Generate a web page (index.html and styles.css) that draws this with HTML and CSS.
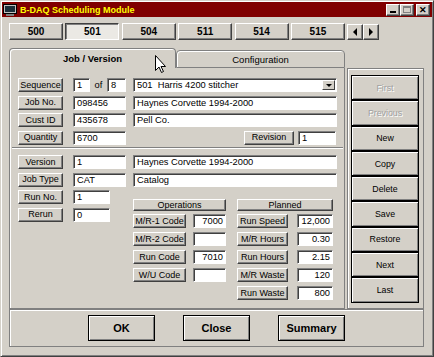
FILE: index.html
```html
<!DOCTYPE html>
<html lang="en">
<head>
  <meta charset="UTF-8" />
  <title>B-DAQ Scheduling Module</title>
  <link rel="stylesheet" href="styles.css">
</head>
<body>
  <div class="window">
    <div class="titlebar">
      <svg class="appicon" width="14" height="12" viewBox="0 0 14 12">
        <rect x="0.5" y="0.5" width="13" height="9" fill="#c0c0c0" stroke="#000"/>
        <rect x="2" y="2" width="10" height="6" fill="#1c2f3a"/>
        <rect x="3" y="10" width="8" height="2" fill="#808080"/>
      </svg>
      <span class="title">B-DAQ Scheduling Module</span>
      <div class="ctrls">
        <span class="ctrl"><i class="min"></i></span>
        <span class="ctrl dim"><i class="max"></i></span>
        <span class="ctrl close">✕</span>
      </div>
    </div>

    <div class="content">
      <div class="jobbar">
        <button class="num">500</button>
        <button class="num down">501</button>
        <button class="num">504</button>
        <button class="num">511</button>
        <button class="num">514</button>
        <button class="num">515</button>
        <div class="arrows">
          <button class="arr"><i class="tri-l"></i></button>
          <button class="arr"><i class="tri-r"></i></button>
        </div>
      </div>

      <div class="main">
        <div class="tabcol">
          <div class="tabs">
            <div class="tab active">Job / Version</div>
            <div class="tab">Configuration</div>
          </div>
          <div class="tabpanel">
            <div class="rows">
              <div class="row">
                <button class="lbl">Sequence</button>
                <div class="field w17">1</div>
                <span class="of">of</span>
                <div class="field w19">8</div>
                <div class="field combo">501&nbsp; Harris 4200 stitcher<span class="drop"><i class="tri-d"></i></span></div>
              </div>
              <div class="row">
                <button class="lbl">Job No.</button>
                <div class="field w53">098456</div>
                <div class="field wide">Haynes Corvette 1994-2000</div>
              </div>
              <div class="row">
                <button class="lbl">Cust ID</button>
                <div class="field w53">435678</div>
                <div class="field wide">Pell Co.</div>
              </div>
              <div class="row">
                <button class="lbl">Quantity</button>
                <div class="field w53">6700</div>
                <button class="lbl rev">Revision</button>
                <div class="field w38">1</div>
              </div>
            </div>

            <div class="sep"></div>

            <div class="rows">
              <div class="row">
                <button class="lbl">Version</button>
                <div class="field w53">1</div>
                <div class="field wide">Haynes Corvette 1994-2000</div>
              </div>
              <div class="row">
                <button class="lbl">Job Type</button>
                <div class="field w53">CAT</div>
                <div class="field wide">Catalog</div>
              </div>
              <div class="split">
                <div class="rows">
                  <div class="row">
                    <button class="lbl">Run No.</button>
                    <div class="field w37">1</div>
                  </div>
                  <div class="row">
                    <button class="lbl">Rerun</button>
                    <div class="field w37">0</div>
                  </div>
                </div>
                <div class="ops">
                  <div class="opcol">
                    <button class="head">Operations</button>
                    <div class="oprow"><button class="lbl w53b">M/R-1 Code</button><div class="field num-in w33">7000</div></div>
                    <div class="oprow"><button class="lbl w53b">M/R-2 Code</button><div class="field num-in w33"></div></div>
                    <div class="oprow"><button class="lbl w53b">Run Code</button><div class="field num-in w33">7010</div></div>
                    <div class="oprow"><button class="lbl w53b">W/U Code</button><div class="field num-in w33"></div></div>
                  </div>
                  <div class="opcol plan">
                    <button class="head">Planned</button>
                    <div class="oprow"><button class="lbl w51">Run Speed</button><div class="field num-in w36">12,000</div></div>
                    <div class="oprow"><button class="lbl w51">M/R Hours</button><div class="field num-in w36">0.30</div></div>
                    <div class="oprow"><button class="lbl w51">Run Hours</button><div class="field num-in w36">2.15</div></div>
                    <div class="oprow"><button class="lbl w51">M/R Waste</button><div class="field num-in w36">120</div></div>
                    <div class="oprow"><button class="lbl w51">Run Waste</button><div class="field num-in w36">800</div></div>
                  </div>
                </div>
              </div>
            </div>
          </div>
        </div>

        <div class="sidebar">
          <button class="side off">First</button>
          <button class="side off">Previous</button>
          <button class="side">New</button>
          <button class="side">Copy</button>
          <button class="side">Delete</button>
          <button class="side">Save</button>
          <button class="side">Restore</button>
          <button class="side">Next</button>
          <button class="side">Last</button>
        </div>
      </div>

      <div class="footer">
        <button class="big">OK</button>
        <button class="big">Close</button>
        <button class="big">Summary</button>
      </div>
    </div>

    <svg class="cursor" width="12" height="19" viewBox="0 0 12 19">
      <path d="M0.5 0.5 L0.5 15.5 L4 12 L6.5 17.5 L8.5 16.5 L6 11.5 L10.5 11.5 Z" fill="#fff" stroke="#000" stroke-width="1"/>
    </svg>
  </div>
</body>
</html>
```

FILE: styles.css
```css
* {
  box-sizing: border-box;
}

body {
  margin: 0;
  font-family: "Liberation Sans", Arial, sans-serif;
  font-size: 9px;
  color: #000;
  background: #d4d0c8;
}

button {
  font-family: inherit;
  font-size: inherit;
  color: inherit;
  padding: 0;
  margin: 0;
  background: #d4d0c8;
}

.window {
  position: relative;
  width: 434px;
  height: 357px;
  background: #d4d0c8;
  border: 1px solid;
  border-color: #d4d0c8 #404040 #404040 #d4d0c8;
  box-shadow: inset 1px 1px #fff, inset -1px -1px #808080;
  padding: 1px;
  display: flex;
  flex-direction: column;
}

/* title bar */
.titlebar {
  height: 15px;
  background: #800000;
  display: flex;
  align-items: center;
  padding: 0 2px 0 1px;
}

.appicon {
  margin-right: 3px;
}

.title {
  flex: 1;
  color: #ffff00;
  font-weight: bold;
  font-size: 9px;
}

.ctrls {
  display: flex;
}

.ctrl {
  width: 14px;
  height: 12px;
  background: #d4d0c8;
  border: 1px solid;
  border-color: #fff #404040 #404040 #fff;
  box-shadow: inset -1px -1px #808080;
  position: relative;
}

.ctrl .min {
  position: absolute;
  left: 3px;
  bottom: 2px;
  width: 6px;
  height: 2px;
  background: #000;
}

.ctrl .max {
  position: absolute;
  left: 2px;
  top: 1px;
  width: 8px;
  height: 7px;
  border: 1px solid #808080;
  border-top-width: 2px;
}

.ctrl.close {
  margin-left: 2px;
  font-size: 9px;
  font-weight: bold;
  line-height: 10px;
  text-align: center;
}

/* body */
.content {
  flex: 1;
  display: flex;
  flex-direction: column;
  padding: 6px 8px 8px 7px;
}

.jobbar {
  display: flex;
  align-items: center;
  gap: 2.4px;
  height: 17px;
}

.num {
  width: 54px;
  height: 17px;
  font-weight: bold;
  font-size: 10px;
  border: 1px solid;
  border-color: #fff #404040 #404040 #fff;
  box-shadow: inset -1px -1px #808080;
}

.num.down {
  background: #ebe9e4;
  border-color: #404040 #fff #fff #404040;
  box-shadow: inset 1px 1px #808080;
}

.arrows {
  display: flex;
  margin-left: 0;
}

.arr {
  width: 16px;
  height: 16px;
  border: 1px solid;
  border-color: #fff #404040 #404040 #fff;
  box-shadow: inset -1px -1px #808080;
  display: flex;
  align-items: center;
  justify-content: center;
}

.tri-l, .tri-r, .tri-d {
  display: block;
  width: 0;
  height: 0;
  border: 4px solid transparent;
}

.tri-l {
  border-right-color: #000;
  border-left-width: 0;
}

.tri-r {
  border-left-color: #000;
  border-right-width: 0;
}

.tri-d {
  border-width: 3px 3.5px 0;
  border-top-color: #000;
}

/* tabs + panel */
.main {
  display: flex;
  gap: 2px;
  margin-top: 8px;
}

.tabcol {
  width: 336px;
  display: flex;
  flex-direction: column;
}

.tabs {
  display: flex;
  align-items: flex-end;
  height: 20px;
}

.tab {
  width: 169px;
  height: 18px;
  border: 1px solid #808080;
  border-radius: 4px 4px 0 0;
  box-shadow: inset 1px 1px #fff;
  text-align: center;
  line-height: 17px;
  font-size: 9.5px;
}

.tab.active {
  width: 167px;
  height: 20px;
  border-bottom: none;
  font-weight: bold;
  line-height: 19px;
}

.tabpanel {
  height: 241px;
  border: 1px solid #808080;
  border-top: none;
  box-shadow: inset 1px 0 #fff;
  padding: 10px 6px 0 8px;
}

.rows {
  display: flex;
  flex-direction: column;
  gap: 3.5px;
}

.row {
  display: flex;
  align-items: center;
  height: 14px;
}

.lbl {
  width: 45px;
  height: 14px;
  flex-shrink: 0;
  border: 1px solid;
  border-color: #fff #404040 #404040 #fff;
  box-shadow: inset -1px -1px #808080;
  line-height: 11px;
  text-align: center;
  margin-right: 10px;
}

.lbl.rev {
  width: 50px;
  margin-left: auto;
  margin-right: 4px;
}

.field {
  height: 14px;
  flex-shrink: 0;
  background: #fff;
  border: 1px solid;
  border-color: #808080 #fff #fff #808080;
  box-shadow: inset 1px 1px #404040;
  padding: 0 2px 0 3px;
  line-height: 12px;
  font-size: 9.3px;
  white-space: nowrap;
  overflow: hidden;
  position: relative;
}

.w17 { width: 17px; }
.w19 { width: 19px; }
.w33 { width: 33px; }
.w36 { width: 36px; }
.w37 { width: 37px; }
.w38 { width: 38px; margin-right: 2px; }
.w53 { width: 53px; margin-right: 7px; }

.of {
  width: 17px;
  text-align: center;
  font-size: 9.3px;
}

.w19 {
  margin-right: 7px;
}

.wide, .combo {
  width: 204px;
}

.drop {
  position: absolute;
  right: 1px;
  top: 1px;
  width: 13px;
  height: 10px;
  background: #d4d0c8;
  border: 1px solid;
  border-color: #fff #404040 #404040 #fff;
  display: flex;
  align-items: center;
  justify-content: center;
}

.sep {
  height: 2px;
  margin: 2.5px -0px 6px -6px;
  width: 331px;
  border-top: 1px solid #808080;
  border-bottom: 1px solid #fff;
}

.split {
  display: flex;
}

.ops {
  display: flex;
  gap: 11px;
  margin-top: 9px;
  margin-left: 23px;
}

.opcol {
  width: 93px;
  display: flex;
  flex-direction: column;
  gap: 4px;
}

.opcol.plan {
  width: 96px;
}

.head {
  height: 12px;
  margin-bottom: -1px;
  border: 1px solid;
  border-color: #fff #404040 #404040 #fff;
  box-shadow: inset -1px -1px #808080;
  line-height: 9px;
  text-align: center;
}

.oprow {
  display: flex;
  justify-content: space-between;
  height: 14px;
}

.oprow .lbl {
  margin-right: 0;
}

.w53b { width: 53px !important; }
.w51 { width: 51px !important; }

.num-in {
  text-align: right;
}

/* right column */
.sidebar {
  align-self: flex-end;
  width: 77px;
  height: 241px;
  border: 1px solid #808080;
  box-shadow: inset 1px 1px #fff;
  padding: 6px 0 0 3px;
  display: flex;
  flex-direction: column;
}

.side {
  width: 68px;
  height: 25.3px;
  border: 1px solid #000;
  box-shadow: inset 1px 1px #fff, inset -1px -1px #808080;
  font-size: 8.8px;
}

.side.off {
  color: #a0a0a0;
  text-shadow: 1px 1px #fff;
}

/* bottom */
.footer {
  height: 38px;
  border: 1px solid #808080;
  box-shadow: inset 1px 1px #fff;
  display: flex;
  justify-content: center;
  align-items: center;
  gap: 28px;
}

.big {
  width: 67px;
  height: 26px;
  border: 1px solid #000;
  box-shadow: inset 1px 1px #fff, inset -1px -1px #808080;
  font-weight: bold;
  font-size: 11px;
}

.cursor {
  position: absolute;
  left: 154px;
  top: 54px;
}
```
